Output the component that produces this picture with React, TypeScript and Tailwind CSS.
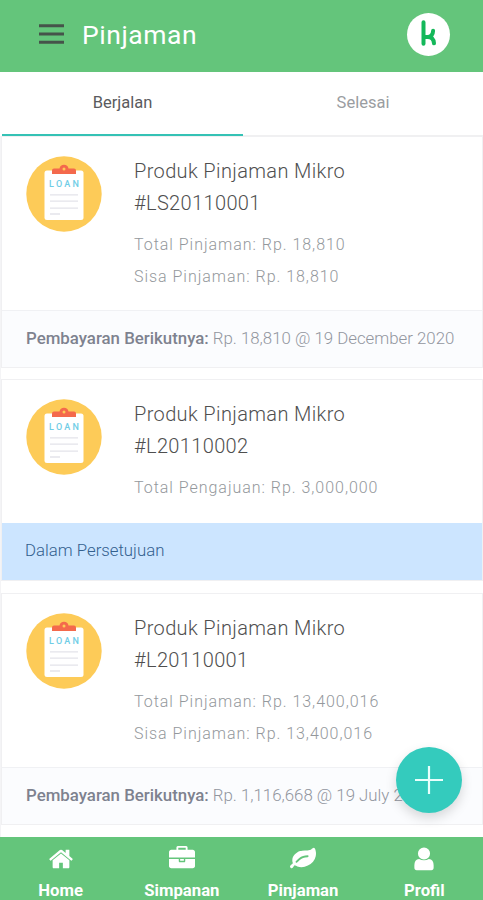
import React from "react";

const FONT = "font-['Roboto','Liberation_Sans',sans-serif]";

const ICONS = {
  home: "M1472 992v480q0 26-19 45t-45 19h-384v-384h-256v384h-384q-26 0-45-19t-19-45v-480q0-1 .5-3t.5-3l575-474 575 474q1 2 1 6zm223-69l-62 74q-8 9-21 11h-3q-13 0-21-7l-692-577-692 577q-12 8-24 7-13-2-21-11l-62-74q-8-10-7-23.5t11-21.5l719-599q32-26 76-26t76 26l244 204v-195q0-14 9-23t23-9h192q14 0 23 9t9 23v408l219 182q10 8 11 21.5t-7 23.5z",
  briefcase:
    "M640 256h512v-128h-512v128zm1152 640v480q0 66-47 113t-113 47h-1472q-66 0-113-47t-47-113v-480h672v160q0 26 19 45t45 19h320q26 0 45-19t19-45v-160h672zm-768 0v128h-256v-128h256zm768-480v384h-1792v-384q0-66 47-113t113-47h352v-160q0-40 28-68t68-28h576q40 0 68 28t28 68v160h352q66 0 113 47t47 113z",
  leaf: "M1280 704q0-26-19-45t-45-19q-172 0-318 49.5t-259.5 134-235.5 219.5q-19 21-19 45 0 26 19 45t45 19q24 0 45-19 27-24 74-71t67-66q137-124 268.5-176t313.5-52q26 0 45-19t19-45zm512-198q0 95-20 193-46 224-184.5 383t-357.5 268q-214 108-438 108-148 0-286-47-15-5-88-42t-96-37q-16 0-39.5 32t-45 70-52.5 70-60 32q-43 0-63.5-17.5t-45.5-59.5q-2-4-6-11t-5.5-10-3-9.5-1.5-13.5q0-35 31-73.5t68-65.5 68-56 31-48q0-4-14-38t-16-44q-9-51-9-104 0-115 43.5-220t119-184.5 170.5-139 204-95.5q55-18 145-25.5t179.5-9 178.5-6 163.5-24 113.5-56.5l29.5-29.5 29.5-28 27-20 36.5-16 43.5-4.5q39 0 70.5 46t47.5 112 24 124 8 96z",
  user: "M1315 520a419 409 0 1 1-838 0a419 409 0 1 1 838 0zM560 890Q700 990 896 990T1232 890Q1560 910 1560 1330V1480Q1560 1664 1400 1664H392Q232 1664 232 1480V1330Q232 910 560 890z",
};

function LoanIcon() {
  return (
    <svg viewBox="0 0 76 76" className="mt-px size-[76px] shrink-0">
      <circle cx="38" cy="38" r="37.7" fill="#fdcb58" />
      <rect x="18.5" y="14.5" width="39" height="49.5" rx="2.5" fill="#fff" />
      <path d="M26 18v-3.5a2 2 0 0 1 2-2h5.5a4.6 4.6 0 0 1 9 0H48a2 2 0 0 1 2 2V18z" fill="#f4694c" />
      <circle cx="38" cy="13" r="1.5" fill="#fdcb58" />
      <text x="23" y="31" fontSize="9" fontWeight="500" textLength="30" className={FONT} fill="#6fcde6">
        LOAN
      </text>
      <path d="M24 38.8h28M24 45.2h28M24 52.2h28M24 58h10" stroke="#e3e3ea" strokeWidth="1.3" />
    </svg>
  );
}

interface Loan {
  code: string;
  details: string[];
  next?: string;
}

const loans: Loan[] = [
  {
    code: "#LS20110001",
    details: ["Total Pinjaman: Rp. 18,810", "Sisa Pinjaman: Rp. 18,810"],
    next: "Rp. 18,810 @ 19 December 2020",
  },
  { code: "#L20110002", details: ["Total Pengajuan: Rp. 3,000,000"] },
  {
    code: "#L20110001",
    details: ["Total Pinjaman: Rp. 13,400,016", "Sisa Pinjaman: Rp. 13,400,016"],
    next: "Rp. 1,116,668 @ 19 July 2021",
  },
];

function LoanCard({ loan }: { loan: Loan }) {
  return (
    <article className="border border-[#f0f0f2] bg-white">
      <div className={loan.next ? "flex h-[173px] gap-8 pt-[18px] pl-6" : "flex h-[143px] gap-8 pt-[18px] pl-6"}>
        <LoanIcon />
        <div>
          <h2 className="text-[20px] leading-8 font-light tracking-[0.36px] text-[#4f4f4f]">
            Produk Pinjaman Mikro
            <br />
            {loan.code}
          </h2>
          <div className="mt-[10px] text-[16px] leading-[31.5px] font-light tracking-[0.97px] text-[#94989c]">
            {loan.details.map((d) => (
              <p key={d}>{d}</p>
            ))}
          </div>
        </div>
      </div>
      {loan.next ? (
        <div className="flex h-[57px] items-center gap-1 border-t border-[#f0f1f4] bg-[#fbfcfe] pl-6 text-[16.84px] font-light whitespace-nowrap text-[#92969e]">
          <b className="font-medium text-[#7e828f]">Pembayaran Berikutnya:</b>
          <span>{loan.next}</span>
        </div>
      ) : (
        <div className="flex h-[57px] items-center bg-[#cce5ff] pb-0.5 pl-[23px] text-[16.8px] font-light text-[#33608e]">
          Dalam Persetujuan
        </div>
      )}
    </article>
  );
}

const nav = [
  { label: "Home", icon: ICONS.home },
  { label: "Simpanan", icon: ICONS.briefcase },
  { label: "Pinjaman", icon: ICONS.leaf },
  { label: "Profil", icon: ICONS.user },
];

export default function App() {
  return (
    <div className={`relative flex h-[900px] w-[483px] flex-col overflow-hidden bg-white ${FONT}`}>
      <header className="flex h-[72px] shrink-0 items-center bg-[#64c57b] pr-[33px] pb-1 pl-[39px]">
        <svg viewBox="0 0 25 21" className="h-[21px] w-[25px]" stroke="#45544a" strokeWidth="3">
          <path d="M0 1.8h25M0 10h25M0 18.3h25" />
        </svg>
        <h1 className="mt-0.5 ml-[18px] text-[26.5px] leading-none tracking-[0.55px] text-white">Pinjaman</h1>
        <div className="ml-auto flex size-[43px] items-center justify-center rounded-full bg-white">
          <svg viewBox="0 0 16 26" className="mt-[-2px] h-[26px] w-4" fill="none" stroke="#14b85a" strokeWidth="4" strokeLinecap="round" strokeLinejoin="round">
            <path d="M2.5 2.3v21.5M2.5 17h4.2q5.2-.5 5.4-6.3M6.7 17q5.8 0 6.3 6.3" />
          </svg>
        </div>
      </header>

      <div className="ml-0.5 flex h-16 shrink-0 text-[16.5px]">
        <div className="flex w-[241px] items-center justify-center border-b-2 border-[#35c2b5] text-[#5a5b5e]">
          <span>Berjalan</span>
        </div>
        <div className="flex flex-1 items-center justify-center border-b border-[#f0f0f1] text-[#9a9da1]">
          <span>Selesai</span>
        </div>
      </div>

      <main className="flex min-h-0 flex-1 flex-col border-l border-[#f4f4f6]">
        <LoanCard loan={loans[0]} />
        <div className="h-[11px] shrink-0" />
        <LoanCard loan={loans[1]} />
        <div className="h-3 shrink-0" />
        <LoanCard loan={loans[2]} />
      </main>

      <button className="absolute top-[747px] left-[396px] flex size-[66px] items-center justify-center rounded-full bg-[#34cbbd] shadow-[0_5px_12px_rgba(0,0,0,0.15)]">
        <svg viewBox="0 0 28 28" className="size-7" stroke="#e9fffc" strokeWidth="2.2">
          <path d="M14 0v28M0 14h28" />
        </svg>
      </button>

      <nav className="-mr-0.5 grid h-[63px] shrink-0 grid-cols-4 bg-[#64c57b] pt-[9px] text-white">
        {nav.map((n) => (
          <a key={n.label} className="flex flex-col items-center">
            <svg viewBox="0 0 1792 1792" className="size-[26px]" fill="currentColor">
              <path d={n.icon} />
            </svg>
            <span className="mt-[9px] text-[16.7px] leading-5 font-bold">{n.label}</span>
          </a>
        ))}
      </nav>
    </div>
  );
}
